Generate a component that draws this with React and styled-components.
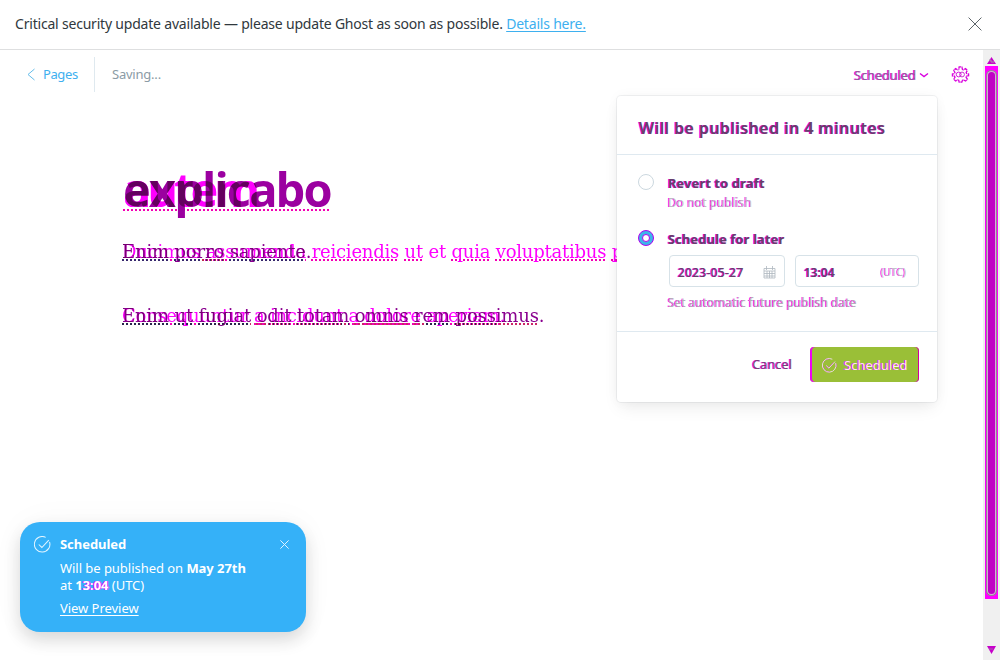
import React from 'react';
import styled, { createGlobalStyle, css } from 'styled-components';

const Global = createGlobalStyle`
  * { box-sizing: border-box; }
  body { margin: 0; background: #fff; color: #30383d; font: 13px/17px "Noto Sans", sans-serif; overflow: hidden; }
  button { border: 0; padding: 0; background: none; font: inherit; color: inherit; }
  svg { display: block; flex-shrink: 0; }
`;
const Page = styled.div`width: 1000px; height: 660px; display: flex; flex-direction: column; overflow: hidden; position: relative;`;
const Alert = styled.header`
  height: 50px; flex: none; border-bottom: 1px solid #dedfe0; padding: 0 18px 1px 15px;
  display: flex; align-items: center; justify-content: space-between;
  p { margin: 0; font-size: 14px; line-height: 20px; letter-spacing: ${p => p.$track}px; white-space: nowrap; }
  a { color: #3eb0ef; text-decoration: underline; text-underline-offset: 2px; }
`;
const Workspace = styled.div`flex: 1; min-height: 0; display: flex;`;
const Editor = styled.main`flex: 1; min-width: 0;`;
const Toolbar = styled.nav`height: 49px; padding: 6px 13px 7px 26px; display: flex; align-items: center; justify-content: space-between;`;
const Group = styled.div`display: flex; align-items: center;`;
const Back = styled.a`
  height: 35px; width: 69px; display: flex; align-items: center; gap: 7px; color: #3eb0ef;
  border-right: 1px solid #dfe9ef; letter-spacing: -.4px;
`;
const Status = styled.span`margin-left: 17px; color: #8b9ba5; letter-spacing: -.22px;`;
const ghost = css`
  color: ${p => p.$ink || '#65406b'};
  text-shadow: ${p => p.$right ? '1px' : '-1px'} 0 #f000f5;
`;
const Ghosted = styled.span`
  ${ghost}
  font-size: ${p => p.$size || 13}px; line-height: ${p => p.$line || 17}px;
  font-weight: ${p => p.$weight || 400}; letter-spacing: ${p => p.$track || 0}px; white-space: nowrap;
`;
const StatusMenu = styled.button`display: flex; align-items: center; gap: 3px; margin-right: 22px; padding-top: 2px;`;
const Article = styled.article`padding: 63px 0 0 123px; white-space: nowrap;`;
const Overlay = styled.div`display: grid; isolation: isolate; > * { grid-area: 1 / 1; margin: 0; justify-self: start; }`;
const Title = styled.h1`
  font: 700 47px/55px "Open Sans", sans-serif; letter-spacing: ${p => p.$track}px;
  color: ${p => p.$front ? '#9b00a0' : '#ff00ff'}; mix-blend-mode: ${p => p.$front ? 'difference' : 'normal'};
`;
const Squiggle = styled.span`
  text-decoration: underline dotted ${p => p.$tone || '#f400b5'} 2px;
  text-decoration-skip-ink: none; text-underline-offset: ${p => p.$offset || 1}px;
`;
const Para = styled.p`
  font: 18px/32px "DejaVu Serif", serif; color: ${p => p.$front ? '#8a008f' : '#ff00ff'};
  letter-spacing: ${p => p.$track}px; mix-blend-mode: ${p => p.$front ? 'difference' : 'normal'};
`;
const Paragraphs = styled.div`margin: 19px 0 0 -1px; display: grid; gap: 32px;`;
const Scroll = styled.aside`width: 17px; background: #f0f0f0; display: flex; flex-direction: column; align-items: center; padding: 7px 2px 6px; justify-content: space-between;`;
const Track = styled.div`width: 13px; height: 533px; margin-top: 1px; padding: 6px 3px 5px; background: #ff00ff; margin-bottom: auto;`;
const Thumb = styled.div`height: 100%; border-radius: 4px; background: #c000c5; box-shadow: 0 0 0 1px #dba8db, 0 0 0 2px #8e888e;`;
const Panel = styled.section`
  position: absolute; left: 617px; top: 96px; width: 320px; height: 306px; background: #fff; border-radius: 4px;
  box-shadow: 0 0 0 1px rgba(96,109,122,.09), 0 8px 17px -3px rgba(0,0,0,.08), 0 0 13px rgba(0,0,0,.035);
`;
const PanelHead = styled.div`height: 59px; padding: 20px 20px 0 22px; border-bottom: 1px solid #dfe9f0;`;
const Choices = styled.div`height: 177px; padding: 18px 18px 0 21px; border-bottom: 1px solid #dfe9f0;`;
const Choice = styled.div`display: flex; gap: 14px; height: ${p => p.$first ? 56 : 110}px;`;
const Radio = styled.span`
  width: 16px; height: 16px; flex: none; border-radius: 50%; background: #fff;
  border: 1px solid #ccd8df; margin: 1px 0 0;
  ${p => p.$on && css`background: #3db5e9; border: 1px solid #b300ee; display: grid; place-items: center;
    &::after { content: ''; width: 6px; height: 6px; border: 1px solid #b500ed; background: #fff; border-radius: 50%; }`}
`;
const Copy = styled.div`flex: 1; display: flex; flex-direction: column; align-items: flex-start;`;
const Fields = styled.div`display: flex; gap: 10px; margin: 6px 0 7px 1px;`;
const Field = styled.div`
  width: ${p => p.$w}px; height: 32px; border: 1px solid #d7e2e8; border-radius: 4px;
  padding: ${p => p.$end ? '2px 12px 0 8px' : '2px 8px 0 8px'}; display: flex; align-items: center; justify-content: space-between;
`;
const Actions = styled.footer`display: flex; height: 67px; align-items: center; justify-content: flex-end; padding: 0 18px 2px 0; gap: 18px;`;
const Confirm = styled.button`
  width: 109px; height: 35px; display: flex; align-items: center; gap: 7px; padding: 2px 0 0 12px !important;
  background: #9abf37 !important; border-radius: 4px; box-shadow: inset 2px 0 #f000f5, inset -1px 0 #d000a0;
`;
const Toast = styled.aside`
  position: absolute; left: 20px; top: 522px; width: 286px; height: 110px; border-radius: 20px;
  background: #35b1f8; color: #fff; display: flex; padding: 14px 17px 0 14px; gap: 9px;
  box-shadow: 0 8px 17px rgba(0,0,0,.14), 0 0 35px rgba(0,0,0,.035);
`;
const ToastCopy = styled.div`
  flex: 1; display: flex; flex-direction: column; white-space: nowrap; letter-spacing: ${p => p.$track}px;
  strong { font-weight: 700; } p { margin: 7px 0 6px; } a { text-decoration: underline; text-underline-offset: 2px; }
`;
const Time = styled.b`color: #fff; span { text-shadow: 1px 0 #bd24fb, -1px 0 #ff00ff; }`;
const Close = styled.div`padding-top: 4px;`;

const Cross = ({ size, color, width = 1 }) => <svg width={size} height={size} viewBox="0 0 12 12"><path d="M.5.5l11 11m0-11l-11 11" stroke={color} strokeWidth={width} fill="none"/></svg>;
const Check = ({ size, color, pink }) => <svg width={size} height={size} viewBox="0 0 16 16" fill="none">
  {pink && <path d="M4 8l3 3 5-6M1 5a7 7 0 0 1 7-4m-7 8a7 7 0 0 0 7 6m7-5a7 7 0 0 0 0-4" stroke="#ca49b5"/>}
  <path d="M14.6 5.5A7.3 7.3 0 1 1 11 1.3M4.5 8l2.9 2.8 6.5-7" stroke={color} strokeWidth=".95"/>
</svg>;
const Gear = () => {
  const d = 'M7.5 3.8L8 1h3l.7 2.8 1.1.5L15.2 3l2 2-1.4 2.2.5 1.2 2.2.5v2l-2.2.5-.5 1.3 1.4 2.1-2 2-2.4-1.2-1.1.4L11 18H8l-.5-2-1.2-.4L4 16.8l-2-2 1.3-2.2-.5-1.2L.5 11V9l2.3-.6.5-1.2L2 5l2-2 2.3 1.3z';
  return <svg width="19" height="17" viewBox="0 0 19 19"><g fill="none"><path d={d} stroke="#d900de" strokeWidth="1.5"/><path d={d} stroke="#eee" strokeWidth="1.3" strokeDasharray="1 4"/><circle cx="7.5" cy="9.5" r="2.7" stroke="#d100d9"/><circle cx="11.2" cy="9.5" r="2.7" stroke="#c71dce"/></g></svg>;
};
const Calendar = () => <svg width="13" height="13" viewBox="0 0 13 13" fill="none" stroke="#aeb8bf"><path d="M1 2.5h11v9.5H1zM1 5h11M1 7.5h11M1 10h11M4 5v7M6.5 5v7M9 5v7M3.5 0v4M9.5 0v4" strokeWidth=".8"/></svg>;
const Words = ({ text, tone }) => text.split(' ').map((w, i) => <React.Fragment key={i}>{i > 0 && ' '}{w === 'et' ? w : <Squiggle $tone={tone}>{w.replace('.', '')}</Squiggle>}{w.endsWith('.') && '.'}</React.Fragment>);

export default function App() {
  return <><Global/><Page>
    <Alert $track={-.2}><p>Critical security update available — please update Ghost as soon as possible. <a>Details here.</a></p><Cross size={14} color="#50585e" width={.8}/></Alert>
    <Workspace>
      <Editor>
        <Toolbar><Group><Back><svg width="10" height="13" viewBox="0 0 10 13" fill="none"><path d="M8.5 1L2 6.5 8.5 12" stroke="#65bdea"/></svg>Pages</Back><Status>Saving...</Status></Group>
          <Group><StatusMenu><Ghosted $ink="#8e6099" $track={-.2}>Scheduled</Ghosted><svg width="10" height="7" viewBox="0 0 10 7" fill="none"><path d="M1 1.5l4 3 4-3" stroke="#d800df" strokeWidth="1.4"/></svg></StatusMenu><Gear/></Group>
        </Toolbar>
        <Article><Overlay><Title $track={-4.1}>autem</Title><Title $front $track={-1.9}><Squiggle $offset={2}>explicabo</Squiggle></Title></Overlay>
          <Paragraphs>
            <Overlay><Para $track={-.22}><Words text="Ducimus assumenda reiciendis ut et quia voluptatibus porro"/></Para><Para $front $track={-.16}><Words text="Enim porro sapiente." tone="#bd2848"/></Para></Overlay>
            <Overlay><Para $track={-.27}><Words text="Consequuntur a incidunt a dolore aperiam."/></Para><Para $front $track={-.16}><Words text="Enim ut fugiat odit totam omnis rem possimus." tone="#cb2468"/></Para></Overlay>
          </Paragraphs>
        </Article>
      </Editor>
      <Scroll><svg width="9" height="8"><path d="M0 7l4.5-7L9 7" fill="#c700ca"/><path d="M2 3h2v2h3" stroke="#a797a8" fill="none"/></svg><Track><Thumb/></Track><svg width="9" height="8"><path d="M0 0h9L4.5 8" fill="#c700ca"/><path d="M2 3h4" stroke="#a16aa7"/></svg></Scroll>
    </Workspace>
    <Panel>
      <PanelHead><Ghosted $size={16} $line={24} $weight={600} $track={.43}>Will be published in 4 minutes</Ghosted></PanelHead>
      <Choices>
        <Choice $first><Radio/><Copy><Ghosted $weight={700} $line={20} $track={.08}>Revert to draft</Ghosted><Ghosted $size={12} $line={19} $ink="#c2bbc5" $track={.08}>Do not publish</Ghosted></Copy></Choice>
        <Choice><Radio $on/><Copy><Ghosted $weight={700} $line={20} $track={.08}>Schedule for later</Ghosted><Fields><Field $w={116}><Ghosted $size={12} $weight={500} $track={.3}>2023-05-27</Ghosted><Calendar/></Field><Field $w={124} $end><Ghosted $size={12} $weight={600}>13:04</Ghosted><Ghosted $size={10} $ink="#bfc5c8">(UTC)</Ghosted></Field></Fields><Ghosted $size={12} $ink="#b4b0b8">Set automatic future publish date</Ghosted></Copy></Choice>
      </Choices>
      <Actions><Ghosted $ink="#744478" $track={-.1}>Cancel</Ghosted><Confirm><Check size={15} color="#f2dceb" pink/><Ghosted $ink="#fae9f4">Scheduled</Ghosted></Confirm></Actions>
    </Panel>
    <Toast><Check size={17} color="#e3f5ff"/><ToastCopy $track={-.04}><strong>Scheduled</strong><p>Will be published on <strong>May 27th</strong><br/>at <Time>1<span>3:04</span></Time> (UTC)</p><a>View Preview</a></ToastCopy><Close><Cross size={9} width={1.3} color="#e3f5ff"/></Close></Toast>
  </Page></>;
}
